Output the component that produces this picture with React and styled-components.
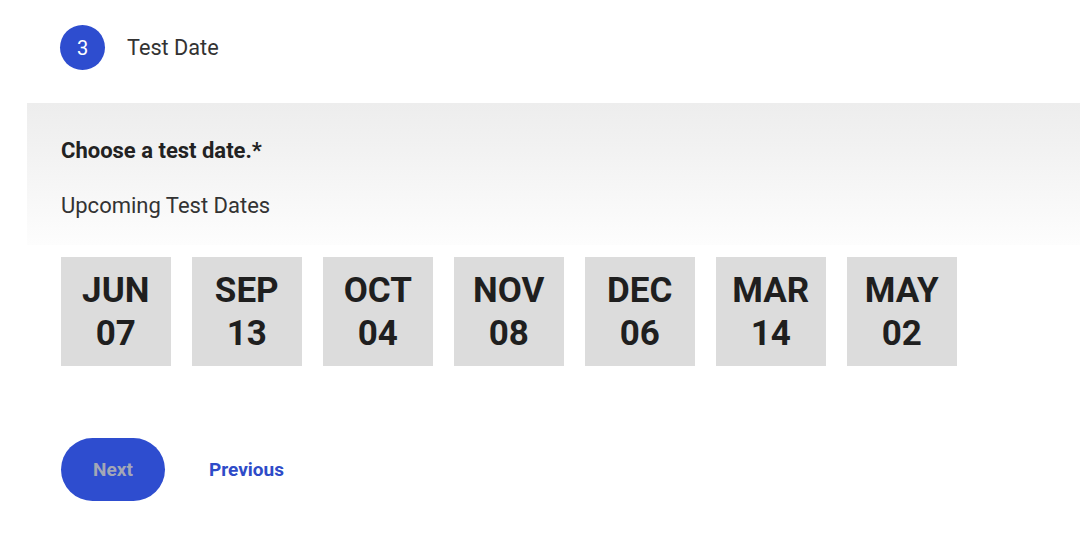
import React from 'react'
import styled, { createGlobalStyle } from 'styled-components'

const GlobalStyle = createGlobalStyle`
  html, body {
    margin: 0;
    padding: 0;
    background: #fff;
    font-family: Roboto, "Noto Sans", Arial, sans-serif;
    color: #222;
  }
`

const Page = styled.div`
  width: 1080px;
  height: 534px;
  overflow: hidden;
`

const StepHeader = styled.div`
  display: flex;
  align-items: center;
  gap: 22px;
  padding: 25px 0 0 60px;
  height: 45px;
`

const StepBadge = styled.div`
  width: 45px;
  height: 45px;
  border-radius: 50%;
  background: #2e4dcf;
  color: #fff;
  display: flex;
  align-items: center;
  justify-content: center;
  font-size: 20px;
`

const StepTitle = styled.span`
  font-size: 21.7px;
  color: #333;
`

const Panel = styled.div`
  margin: 33px 0 0 27px;
  padding: 35px 0 0 34px;
  height: 107px;
  background: linear-gradient(to bottom, #ededed 0%, #f3f3f3 40%, #fdfdfd 100%);
`

const Question = styled.div`
  font-size: 22px;
  font-weight: 700;
  color: #222;
  line-height: 26px;
`

const SubLabel = styled.div`
  margin-top: 29px;
  font-size: 22px;
  color: #333;
  line-height: 26px;
`

const DateList = styled.div`
  display: flex;
  gap: 21.5px;
  padding: 12px 0 0 61px;
`

const DateCard = styled.button`
  width: 109.5px;
  height: 109px;
  border: none;
  background: #dcdcdc;
  display: flex;
  flex-direction: column;
  align-items: center;
  justify-content: center;
  font-family: Roboto, Arial, sans-serif;
  font-weight: 700;
  font-size: 35px;
  line-height: 43px;
  color: #1f1f1f;
  padding: 0;
  cursor: pointer;
`

const Actions = styled.div`
  display: flex;
  align-items: center;
  gap: 44px;
  padding: 72px 0 0 61px;
`

const NextButton = styled.button`
  width: 104px;
  height: 63px;
  border: none;
  border-radius: 32px;
  background: #2e4dcf;
  color: #a3a7b6;
  font-family: Roboto, Arial, sans-serif;
  font-weight: 700;
  font-size: 19px;
`

const PrevLink = styled.a`
  color: #2e4bc8;
  font-weight: 700;
  font-size: 19px;
  text-decoration: none;
`

const dates = [
  ['JUN', '07'],
  ['SEP', '13'],
  ['OCT', '04'],
  ['NOV', '08'],
  ['DEC', '06'],
  ['MAR', '14'],
  ['MAY', '02'],
]

export default function App() {
  return (
    <Page>
      <GlobalStyle />
      <StepHeader>
        <StepBadge>3</StepBadge>
        <StepTitle>Test Date</StepTitle>
      </StepHeader>
      <Panel>
        <Question>Choose a test date.*</Question>
        <SubLabel>Upcoming Test Dates</SubLabel>
      </Panel>
      <DateList>
        {dates.map(([m, d]) => (
          <DateCard key={m}>
            <span>{m}</span>
            <span>{d}</span>
          </DateCard>
        ))}
      </DateList>
      <Actions>
        <NextButton>Next</NextButton>
        <PrevLink href="#">Previous</PrevLink>
      </Actions>
    </Page>
  )
}
